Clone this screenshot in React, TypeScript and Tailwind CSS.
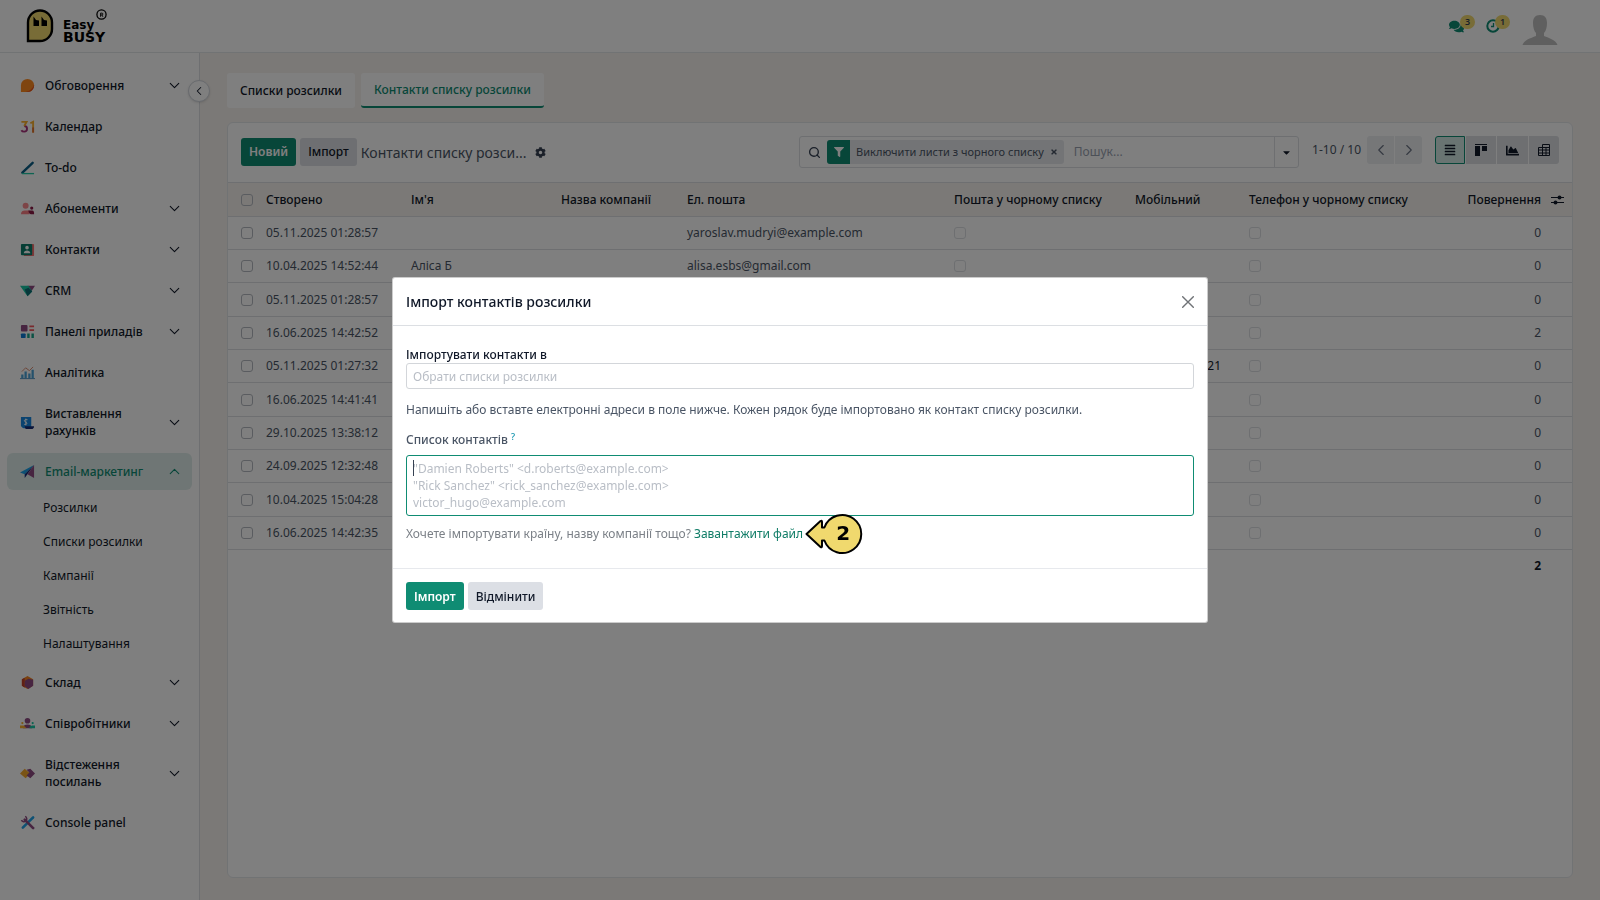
import { ReactNode } from 'react'
import { FaAlignJustify, FaCaretDown, FaChartArea, FaCog, FaComments, FaFilter, FaTimes } from 'react-icons/fa'
import { ChevronDown, ChevronLeft, ChevronRight, ChevronUp, Search } from 'lucide-react'

type MenuItem = { label: string; icon: ReactNode; arrow?: boolean; active?: boolean }

const menuTop: MenuItem[] = [
  {
    label: 'Обговорення',
    arrow: true,
    icon: (
      <>
        <path d="M1 15V8a7 7 0 1 1 7 7z" fill="#ff8a1f" />
        <path d="M6 15C11 14 14 11 15 7a7 7 0 0 1-7 8z" fill="#e8501f" />
      </>
    ),
  },
  {
    label: 'Календар',
    icon: (
      <>
        <path d="M4.500 7.500c4 0 4 6 0 6-1.500 0-2.500-.5-3-1.500" fill="none" stroke="#a8337c" strokeWidth="2" />
        <path d="M1.500 3h5.500L4.500 7.500" fill="none" stroke="#fbb02d" strokeWidth="2" />
        <path d="M11 4.500l3-1.500v11.500" fill="none" stroke="#fbb02d" strokeWidth="2" />
        <path d="M14 9v5.500" stroke="#e0702f" strokeWidth="2" />
      </>
    ),
  },
  {
    label: 'To-do',
    icon: (
      <>
        <path d="M2.500 13.500L13.500 3" stroke="#0b5f87" strokeWidth="2.600" strokeLinecap="round" />
        <path d="M2 14.500h13" stroke="#1ec8a5" strokeWidth="1.400" />
      </>
    ),
  },
  {
    label: 'Абонементи',
    arrow: true,
    icon: (
      <>
        <circle cx="6" cy="5" r="3.200" fill="#fb8a8f" />
        <path d="M1 14c0-3 2-4 4-4h5v4z" fill="#fb7e84" />
        <circle cx="12.500" cy="7.500" r="1.700" fill="#8d1b47" />
        <path d="M9 10h4c2 0 2 2 2 4h-3c-2 0-3-2-3-4z" fill="#8d1b47" />
      </>
    ),
  },
  {
    label: 'Контакти',
    arrow: true,
    icon: (
      <>
        <rect x="4" y="2" width="11" height="13" rx="1" fill="#f87171" />
        <rect x="1" y="2" width="12" height="12" rx="1" fill="#0a7d6b" />
        <circle cx="7.500" cy="6" r="1.900" fill="#fff" />
        <path d="M4 12c0-4 7-4 7 0z" fill="#fff" />
      </>
    ),
  },
  {
    label: 'CRM',
    arrow: true,
    icon: (
      <>
        <path d="M8 3h8l-4 6z" fill="#8f4b82" />
        <path d="M0 3h9l4 6-5 5z" fill="#16c7a4" />
        <path d="M5 7l4-2 4 4-5 5z" fill="#0c6f74" />
      </>
    ),
  },
  {
    label: 'Панелі приладів',
    arrow: true,
    icon: (
      <>
        <rect x="1" y="1" width="7" height="7" rx="1" fill="#8f4b82" />
        <path d="M10 2.500h5M10 6.500h5" stroke="#f2545b" strokeWidth="2" />
        <rect x="1" y="10" width="5" height="5" rx="1" fill="#0a78d4" />
        <path d="M9 10v5M13.500 10v5" stroke="#17a58a" strokeWidth="2.600" />
      </>
    ),
  },
  {
    label: 'Аналітика',
    icon: (
      <>
        <path d="M2.500 14v-4M6 14V7M10 14V9M13.500 14V5" stroke="#4aa3d8" strokeWidth="2.400" />
        <path d="M0 14.500h16" stroke="#4b8fc0" />
        <path d="M2 7l4-4 4 3 4-4" fill="none" stroke="#d98a6f" />
      </>
    ),
  },
  {
    label: 'Виставлення рахунків',
    arrow: true,
    icon: (
      <>
        <path d="M1 2h11v12H4c-1 0-3-1-3-3z" fill="#1687e0" />
        <path d="M5 12h10c0 2-1 3-3 3H7c-1 0-2-1-2-3z" fill="#142b77" />
        <path d="M8 5C4 4 4 7 6 7.500s2 3-1.500 2.500M6.200 3.800v7.200" fill="none" stroke="#fff" />
      </>
    ),
  },
  {
    label: 'Email-маркетинг',
    arrow: true,
    active: true,
    icon: (
      <>
        <path d="M15 1L0 9l5 2z" fill="#18a0e8" />
        <path d="M15 1L5 11v4z" fill="#172d79" />
        <path d="M15 1L8 11l7 4z" fill="#8f4b82" />
      </>
    ),
  },
]

const subMenu = ['Розсилки', 'Списки розсилки', 'Кампанії', 'Звітність', 'Налаштування']

const menuBottom: MenuItem[] = [
  {
    label: 'Склад',
    arrow: true,
    icon: (
      <>
        <path d="M8 1l6 3.500v7L8 15l-6-3.500v-7z" fill="#f5821f" />
        <path d="M2 4.500L5 3v10.500L2 11.500z" fill="#c2402a" />
        <path d="M9 4l5 1v6.500L9 15l-4-3V6z" fill="#8f4b82" />
      </>
    ),
  },
  {
    label: 'Співробітники',
    arrow: true,
    icon: (
      <>
        <circle cx="8" cy="5" r="3" fill="#8f4b82" />
        <path d="M3 13c1-3 2-4 5-4s4 1 5 4z" fill="#8f4b82" />
        <path d="M0 10h4l3 3H0z" fill="#fbb02d" />
        <path d="M10 13c0-2 2-3 3-3h3v3z" fill="#17c7a4" />
        <circle cx="2.500" cy="7.500" r="1.200" fill="#fbb02d" />
        <circle cx="13.500" cy="7.500" r="1.200" fill="#17c7a4" />
      </>
    ),
  },
  {
    label: 'Відстеження посилань',
    arrow: true,
    icon: (
      <>
        <path d="M0 8l5-5 6 5-5 5z" fill="#f4a92b" />
        <path d="M7 4l4-1 5 5-5 5-4-3 3-3z" fill="#8f4b82" />
      </>
    ),
  },
  {
    label: 'Console panel',
    icon: (
      <>
        <path d="M14 2.500L3 13.500" stroke="#1fa3e8" strokeWidth="2.800" strokeLinecap="round" />
        <path d="M5 5l9 9" stroke="#8f4b82" strokeWidth="2.800" strokeLinecap="round" />
        <path d="M5.500 1.500a3 3 0 1 1-4 4" fill="none" stroke="#8f4b82" strokeWidth="1.600" />
      </>
    ),
  },
]

const rows = [
  { date: '05.11.2025 01:28:57', name: '', mail: 'yaroslav.mudryi@example.com', phone: '', bounce: 0 },
  { date: '10.04.2025 14:52:44', name: 'Аліса Б', mail: 'alisa.esbs@gmail.com', phone: '', bounce: 0 },
  { date: '05.11.2025 01:28:57', name: '', mail: '', phone: '', bounce: 0 },
  { date: '16.06.2025 14:42:52', name: '', mail: '', phone: '', bounce: 2 },
  { date: '05.11.2025 01:27:32', name: '', mail: '', phone: '21', bounce: 0 },
  { date: '16.06.2025 14:41:41', name: '', mail: '', phone: '', bounce: 0 },
  { date: '29.10.2025 13:38:12', name: '', mail: '', phone: '', bounce: 0 },
  { date: '24.09.2025 12:32:48', name: '', mail: '', phone: '', bounce: 0 },
  { date: '10.04.2025 15:04:28', name: '', mail: '', phone: '', bounce: 0 },
  { date: '16.06.2025 14:42:35', name: '', mail: '', phone: '', bounce: 0 },
]

function Check({ label, soft }: { label: string; soft?: boolean }) {
  return (
    <input
      type="checkbox"
      aria-label={label}
      className={
        soft
          ? 'block size-3 appearance-none rounded-[3px] border border-[#dcdfe3]'
          : 'block size-3 appearance-none rounded-[3px] border border-[#b4b9c0]'
      }
    />
  )
}

function MenuRow({ item }: { item: MenuItem }) {
  const Arrow = item.active ? ChevronUp : ChevronDown
  return (
    <button
      className={
        item.active
          ? 'flex w-full items-center gap-[10px] rounded-md bg-[#dfedea] px-[13px] py-[10px] text-left text-[#0f8c73]'
          : 'flex w-full items-center gap-[10px] rounded-md px-[13px] py-[10px] text-left'
      }
    >
      <svg viewBox="0 0 16 16" className="size-[15px] shrink-0">
        {item.icon}
      </svg>
      <span className="w-[104px]">{item.label}</span>
      {item.arrow && <Arrow className="-mr-1 ml-auto size-[17px] shrink-0" strokeWidth={1.500} />}
    </button>
  )
}

function Header() {
  return (
    <header className="flex h-[53px] items-center justify-between border-b border-[#e3e6e9] bg-white pr-[42px] pl-[26px]">
      <a href="#" aria-label="Easy BUSY" className="flex items-center gap-[9px] text-black">
        <svg viewBox="0 0 28 34" className="h-[34px] w-7">
          <path d="M2 32V13.500a12 12 0 0 1 24 0V20a12 12 0 0 1-12 12z" fill="#f0d96e" stroke="#000" strokeWidth="2.400" />
          <path d="M7.500 7.500l2.500 3.500 3 .5V17H7.500zM15.500 7.500l2.500 3.500 3 .5V17h-5.500z" fill="#000" />
        </svg>
        <span className="relative flex flex-col pt-[10px] font-['DejaVu_Sans',sans-serif] text-[14px] leading-3 font-bold">
          <span className="text-[12px]">Easy</span>
          <span>BUSY</span>
          <svg viewBox="0 0 12 12" className="absolute top-0 left-[33px] size-[11px]">
            <circle cx="6" cy="6" r="5" fill="none" stroke="#000" strokeWidth="1.400" />
            <path d="M5 8.500v-4h1.500a1 1 0 0 1 0 2H5M6.500 6.500l1 2" fill="none" stroke="#000" strokeWidth="1" />
          </svg>
        </span>
      </a>
      <div className="flex items-center">
        <button className="relative w-[37px] text-[#0f8c73]" aria-label="Повідомлення">
          <FaComments className="size-[15px]" />
          <span className="absolute -top-1 left-[11px] flex h-[14px] w-[15px] items-center justify-center rounded-full bg-[#f0d96e] text-[9px] font-semibold text-gray-700">
            3
          </span>
        </button>
        <button className="relative w-8 text-[#0f8c73]" aria-label="Дії">
          <svg viewBox="0 0 14 14" className="size-[14px]" fill="none" stroke="currentColor">
            <circle cx="7" cy="7" r="5.700" strokeWidth="2" />
            <path d="M7.500 4v3.500H5" strokeWidth="1.300" />
          </svg>
          <span className="absolute -top-1 left-[9px] flex h-[14px] w-[15px] items-center justify-center rounded-full bg-[#f0d96e] text-[9px] font-semibold text-gray-700">
            1
          </span>
        </button>
        <svg viewBox="0 0 36 30" className="mt-[7px] ml-1 h-[30px] w-9">
          <path
            d="M18 0c5 0 7 3 7 8 0 4-1 8-3 10v3c5 2 12 4 13.500 9H.5C2 25 9 23 14 21v-3c-2-2-3-6-3-10 0-5 2-8 7-8z"
            fill="#bfbfbf"
          />
        </svg>
      </div>
    </header>
  )
}

function Sidebar() {
  return (
    <aside className="relative w-[200px] shrink-0 border-r border-[#dcdfe3] bg-white text-[12px] leading-[17px] font-medium text-gray-900">
      <nav className="flex flex-col gap-1 px-[7px] pt-[14px]">
        {menuTop.map((m) => (
          <MenuRow key={m.label} item={m} />
        ))}
        <ul className="-mt-1 font-normal">
          {subMenu.map((s) => (
            <li key={s}>
              <a href="#" className="flex h-[34px] items-center pl-9">
                {s}
              </a>
            </li>
          ))}
        </ul>
        {menuBottom.map((m) => (
          <MenuRow key={m.label} item={m} />
        ))}
      </nav>
      <button
        aria-label="Згорнути меню"
        className="absolute top-[27px] -right-[11px] flex size-[22px] items-center justify-center rounded-full border border-gray-300 bg-white shadow"
      >
        <ChevronLeft className="size-[14px]" strokeWidth={1.800} />
      </button>
    </aside>
  )
}

function ControlPanel() {
  return (
    <div className="flex items-start justify-between px-[13px] pt-[13px] pb-[14px]">
      <div className="flex items-center gap-1 pt-[2px] text-[12px] font-medium">
        <button className="h-7 rounded-[3px] bg-[#0f8c73] px-2 font-semibold text-white">Новий</button>
        <button className="h-7 rounded-[3px] bg-[#dcdfe5] px-2 text-gray-900">Імпорт</button>
        <span className="text-[14px] font-normal text-gray-600">Контакти списку розси...</span>
        <button aria-label="Дії" className="ml-1">
          <FaCog className="size-[11px] text-gray-700" />
        </button>
      </div>
      <div className="flex items-start">
        <div className="flex h-8 w-[500px] items-center rounded-[3px] border border-[#dcdfe3]">
          <Search className="mr-[6px] ml-2 size-[13px] text-gray-700" strokeWidth={2.500} />
          <div className="flex h-6 items-center overflow-hidden rounded-[3px] bg-[#e7e9ed] text-[11px] text-gray-600">
            <span className="flex h-6 w-[23px] items-center justify-center bg-[#0f8c73] text-white">
              <FaFilter className="size-[10px]" />
            </span>
            <span className="pl-[6px]">Виключити листи з чорного списку</span>
            <button aria-label="Видалити фільтр" className="px-[6px]">
              <FaTimes className="size-2" />
            </button>
          </div>
          <input
            aria-label="Пошук"
            placeholder="Пошук..."
            className="min-w-0 flex-1 pl-[10px] text-[12px] outline-none placeholder:text-gray-400"
          />
          <button
            aria-label="Параметри пошуку"
            className="flex h-full w-6 items-center justify-center border-l border-[#dcdfe3]"
          >
            <FaCaretDown className="size-[11px]" />
          </button>
        </div>
        <span className="ml-[13px] pt-[5px] text-[12px] leading-[18px] text-gray-600">1-10 / 10</span>
        <div className="ml-[6px] flex gap-px text-gray-500">
          <button aria-label="Назад" className="flex h-7 w-[27px] items-center justify-center rounded-l-[3px] bg-[#eceef1]">
            <ChevronLeft className="size-[18px]" strokeWidth={1.500} />
          </button>
          <button aria-label="Вперед" className="flex h-7 w-[27px] items-center justify-center rounded-r-[3px] bg-[#eceef1]">
            <ChevronRight className="size-[18px]" strokeWidth={1.500} />
          </button>
        </div>
        <div className="ml-[13px] flex gap-px text-gray-900">
          <button
            aria-label="Список"
            className="flex h-7 w-[30px] items-center justify-center rounded-l-[3px] border border-[#0f8c73] bg-[#d2e9e4]"
          >
            <FaAlignJustify className="size-3" />
          </button>
          <button aria-label="Канбан" className="flex h-7 w-[30px] items-center justify-center bg-[#dcdfe3]">
            <svg viewBox="0 0 12 12" className="size-3">
              <path d="M0 0h12v1H0zM0 2h5v10H0zM7 2h5v5H7z" fill="currentColor" />
            </svg>
          </button>
          <button aria-label="Графік" className="flex h-7 w-[31px] items-center justify-center bg-[#dcdfe3]">
            <FaChartArea className="size-[13px]" />
          </button>
          <button aria-label="Зведена" className="flex h-7 w-[30px] items-center justify-center rounded-r-[3px] bg-[#dcdfe3]">
            <svg viewBox="0 0 12 12" className="size-3" fill="none" stroke="currentColor">
              <path d="M4.500 3.500v-3h7v11H.5v-8h11M4.500 3.500v8M8 3.500v8M.5 6h11M.5 9h11" />
            </svg>
          </button>
        </div>
      </div>
    </div>
  )
}

function ContactsTable() {
  return (
    <table className="w-full table-fixed border-collapse text-left text-[12px] text-gray-600">
      <colgroup>
        <col className="w-[34px]" />
        <col className="w-[145px]" />
        <col className="w-[150px]" />
        <col className="w-[126px]" />
        <col className="w-[267px]" />
        <col className="w-[181px]" />
        <col className="w-[114px]" />
        <col />
        <col className="w-[27px]" />
      </colgroup>
      <thead className="border-y border-[#dcdfe3] bg-[#f7f3ef] text-gray-900">
        <tr className="h-[34px] *:pl-1 *:font-medium">
          <th>
            <div className="pl-[9px]">
              <Check label="Вибрати всі" />
            </div>
          </th>
          <th>Створено</th>
          <th>Ім'я</th>
          <th>Назва компанії</th>
          <th>Ел. пошта</th>
          <th>Пошта у чорному списку</th>
          <th>Мобільний</th>
          <th>
            <div className="flex justify-between pr-1">
              <span>Телефон у чорному списку</span>
              <span>Повернення</span>
            </div>
          </th>
          <th>
            <button aria-label="Стовпці" className="ml-[2px] flex">
              <svg viewBox="0 0 13 12" className="h-3 w-[13px]" fill="currentColor">
                <path d="M0 3h13v1H0zM0 8h13v1H0z" />
                <circle cx="8.500" cy="3.500" r="2" />
                <circle cx="4.500" cy="8.500" r="2" />
              </svg>
            </button>
          </th>
        </tr>
      </thead>
      <tbody>
        {rows.map((r, i) => (
          <tr key={i} className="h-[33px] border-b border-[#dcdfe3] *:pl-1 nth-[3n]:h-[34px]">
            <td>
              <div className="pl-[9px]">
                <Check label={`Вибрати ${r.date}`} />
              </div>
            </td>
            <td>{r.date}</td>
            <td>{r.name}</td>
            <td></td>
            <td>{r.mail}</td>
            <td>
              <Check soft label="Пошта у чорному списку" />
            </td>
            <td className="pr-6 text-right text-gray-900">{r.phone}</td>
            <td>
              <div className="flex items-center justify-between pr-1">
                <Check soft label="Телефон у чорному списку" />
                <span>{r.bounce}</span>
              </div>
            </td>
            <td></td>
          </tr>
        ))}
      </tbody>
      <tfoot>
        <tr className="h-[33px] font-bold text-gray-900">
          <td colSpan={7}></td>
          <td className="pr-1 text-right">2</td>
          <td></td>
        </tr>
      </tfoot>
    </table>
  )
}

function ImportDialog() {
  return (
    <div className="fixed inset-0 flex items-center justify-center bg-black/50">
      <div
        role="dialog"
        aria-labelledby="dialog-title"
        className="w-full max-w-[816px] rounded-[3px] border border-black/20 bg-white text-[12px] leading-[17px] text-gray-600"
      >
        <div className="flex h-12 items-center justify-between border-b border-[#dcdfe3] px-[13px]">
          <h2 id="dialog-title" className="text-[14px] font-medium text-gray-900">
            Імпорт контактів розсилки
          </h2>
          <button aria-label="Закрити">
            <svg viewBox="0 0 12 12" className="size-3" stroke="#6f7276" strokeWidth="1.400" strokeLinecap="round">
              <path d="M.7.700l10.600 10.600M11.300.700L.700 11.300" />
            </svg>
          </button>
        </div>
        <div className="px-[13px] pt-5 pb-[26px]">
          <label htmlFor="lists" className="block font-medium text-gray-900">
            Імпортувати контакти в
          </label>
          <input
            id="lists"
            placeholder="Обрати списки розсилки"
            className="block h-[26px] w-full rounded-[3px] border border-[#d3d6da] px-[6px] outline-none placeholder:text-[#b9bec6]"
          />
          <p className="mt-3">
            Напишіть або вставте електронні адреси в поле нижче. Кожен рядок буде імпортовано як контакт списку розсилки.
          </p>
          <label htmlFor="contacts" className="mt-[13px] block font-medium">
            Список контактів <sup className="text-[9px] text-[#0f93ad]">?</sup>
          </label>
          <div className="relative mt-[7px]">
            <textarea
              id="contacts"
              rows={3}
              placeholder={
                '"Damien Roberts" <d.roberts@example.com>\n"Rick Sanchez" <rick_sanchez@example.com>\nvictor_hugo@example.com'
              }
              className="block h-[61px] w-full resize-none overflow-hidden rounded-[3px] border border-[#0f8c73] px-[6px] py-1 leading-[17px] outline-none placeholder:text-[#b9bec6]"
            />
            <span className="absolute top-[5px] left-[7px] h-4 w-px bg-gray-700"></span>
          </div>
          <div className="mt-[9px] flex items-center gap-[3px]">
            <span className="text-[#7b8087]">Хочете імпортувати країну, назву компанії тощо?</span>
            <a href="#" className="relative text-[#0f7c66]">
              Завантажити файл
              <span className="absolute top-1/2 left-full ml-[2px] flex h-[42px] w-[58px] -translate-y-1/2 items-center justify-end pr-[13px] font-['DejaVu_Sans',sans-serif] text-[20px] font-bold text-black">
                <svg viewBox="0 0 58 42" className="absolute inset-0 h-[42px] w-[58px]">
                  <path
                    d="M1.500 21L15.500 8q1.500-1 1.500 1v5.500h2.400a19 19 0 1 1 0 13H17V33q0 2-1.500 1z"
                    fill="#f0d96e"
                    stroke="#000"
                    strokeWidth="2"
                    strokeLinejoin="round"
                  />
                </svg>
                <span className="relative">2</span>
              </span>
            </a>
          </div>
        </div>
        <div className="flex gap-1 border-t border-[#e7e9ed] px-[13px] pt-[13px] pb-3 font-medium">
          <button className="h-7 rounded-[3px] bg-[#0f8c73] px-2 font-semibold text-white">Імпорт</button>
          <button className="h-7 rounded-[3px] bg-[#dcdfe5] px-2 text-gray-900">Відмінити</button>
        </div>
      </div>
    </div>
  )
}

export default function App() {
  return (
    <div className="flex min-h-screen flex-col bg-[#f7f3ef] font-['Noto_Sans',sans-serif] text-gray-900">
      <Header />
      <div className="flex flex-1">
        <Sidebar />
        <main className="flex min-w-0 flex-1 flex-col px-[27px] pt-5 pb-[22px]">
          <div className="flex gap-[6px] text-[12px] font-medium">
            <a href="#" className="flex h-[35px] items-center rounded-[3px] bg-white px-[13px]">
              Списки розсилки
            </a>
            <a
              href="#"
              className="flex h-[35px] items-center rounded-[3px] border-b-2 border-[#0f8c73] bg-white px-[13px] text-[#0f8c73]"
            >
              Контакти списку розсилки
            </a>
          </div>
          <section className="mt-[14px] flex-1 rounded-md border border-[#e3e6e9] bg-white">
            <ControlPanel />
            <ContactsTable />
          </section>
        </main>
      </div>
      <ImportDialog />
    </div>
  )
}
